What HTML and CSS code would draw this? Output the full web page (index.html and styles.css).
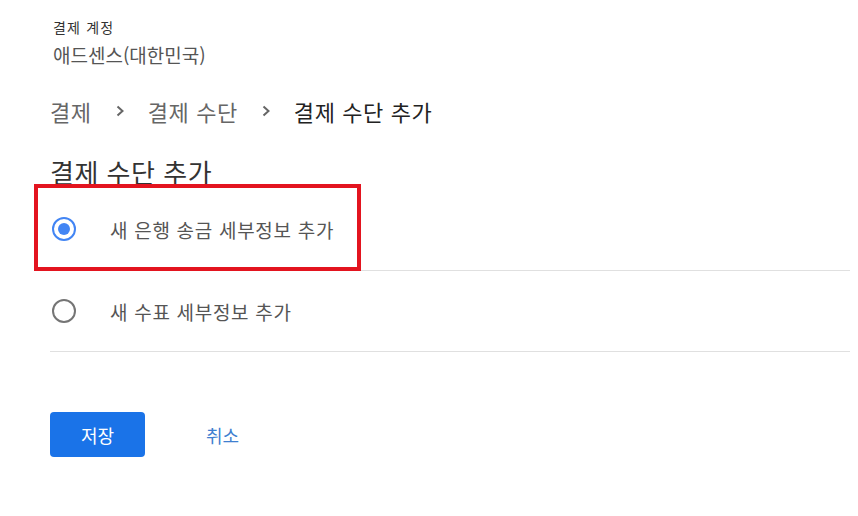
FILE: index.html
```html
<!DOCTYPE html>
<html lang="ko">
<head>
<meta charset="utf-8">
<link rel="stylesheet" href="styles.css">
</head>
<body>
<div class="page">
  <div class="account">
    <div class="account-label">결제 계정</div>
    <div class="account-name">애드센스(대한민국)</div>
  </div>
  <nav class="crumbs">
    <span class="crumb">결제</span>
    <svg class="chev" width="14" height="14" viewBox="0 0 14 14"><polyline points="4.5,2.5 9.5,7 4.5,11.5" fill="none" stroke="#666" stroke-width="2"/></svg>
    <span class="crumb">결제 수단</span>
    <svg class="chev" width="14" height="14" viewBox="0 0 14 14"><polyline points="4.5,2.5 9.5,7 4.5,11.5" fill="none" stroke="#666" stroke-width="2"/></svg>
    <span class="crumb current">결제 수단 추가</span>
  </nav>
  <h1 class="title">결제 수단 추가</h1>
  <div class="options">
    <label class="option">
      <span class="radio checked"><span class="dot"></span></span>
      <span class="option-text">새 은행 송금 세부정보 추가</span>
      <span class="highlight"></span>
    </label>
    <label class="option">
      <span class="radio"></span>
      <span class="option-text">새 수표 세부정보 추가</span>
    </label>
  </div>
  <div class="actions">
    <button class="btn-save">저장</button>
    <button class="btn-cancel">취소</button>
  </div>
</div>
</body>
</html>
```

FILE: styles.css
```css
html, body {
  margin: 0;
  padding: 0;
  background: #fff;
}
body {
  font-family: "Noto Sans CJK KR", "Noto Sans", sans-serif;
  color: #333;
}
.page {
  width: 800px;
  padding: 16px 0 0 50px;
}
.account-label {
  font-size: 14px;
  letter-spacing: 1.2px;
  line-height: 22px;
  color: #333;
  padding-left: 3px;
}
.account-name {
  font-size: 19px;
  line-height: 28px;
  color: #555;
  padding-left: 3px;
  margin-top: 3px;
}
.crumbs {
  display: flex;
  align-items: center;
  gap: 19px;
  margin-top: 26px;
  height: 32px;
}
.crumb {
  font-size: 22px;
  letter-spacing: 0.6px;
  line-height: 32px;
  color: #666;
}
.crumb.current {
  color: #222;
}
.chev {
  display: block;
  margin: 0 2px;
}
.title {
  margin: 29px 0 0 0;
  font-size: 26px;
  letter-spacing: 0.5px;
  font-weight: 400;
  line-height: 32px;
  color: #333;
}
.option {
  position: relative;
  display: flex;
  align-items: center;
  height: 80px;
  border-bottom: 1px solid #e0e0e0;
}
.option:first-child {
  height: 82px;
}
.radio {
  box-sizing: border-box;
  width: 24px;
  height: 24px;
  border-radius: 50%;
  border: 2px solid #757575;
  margin-left: 2px;
  display: flex;
  align-items: center;
  justify-content: center;
}
.radio.checked {
  border-color: #4285f4;
}
.dot {
  width: 12px;
  height: 12px;
  border-radius: 50%;
  background: #4285f4;
}
.option-text {
  margin-left: 34px;
  font-size: 19px;
  letter-spacing: 0.7px;
  color: #555;
}
.highlight {
  position: absolute;
  left: -16px;
  top: -4px;
  width: 319px;
  height: 79px;
  border: 4px solid #e3141f;
  pointer-events: none;
}
.actions {
  display: flex;
  align-items: center;
  margin-top: 60px;
}
.btn-save {
  width: 95px;
  height: 45px;
  border: none;
  border-radius: 4px;
  background: #1a73e8;
  color: #fff;
  font-family: inherit;
  font-size: 18px;
  cursor: pointer;
}
.btn-cancel {
  margin-left: 61px;
  background: none;
  border: none;
  padding: 4px 0;
  color: #3f7fd0;
  font-family: inherit;
  font-size: 18px;
  cursor: pointer;
}
```
